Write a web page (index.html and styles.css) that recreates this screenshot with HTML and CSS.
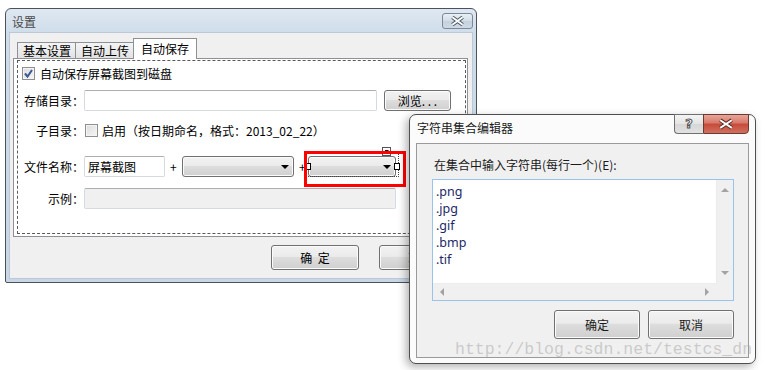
FILE: index.html
```html
<!DOCTYPE html>
<html lang="zh-CN">
<head>
    <meta charset="UTF-8">
    <title>设置</title>
    <link rel="stylesheet" href="styles.css">
</head>
<body>

<div class="desktop">

    <!-- main settings window -->
    <div class="window main-window">
        <div class="titlebar">
            <span class="title">设置</span>
            <span class="caption-btn close-btn">
                <svg width="31" height="16" viewBox="0 0 31 16">
                    <path d="M10 4 L21 12 M21 4 L10 12" stroke="#4b5563" stroke-width="4" fill="none"/>
                    <path d="M10 4 L21 12 M21 4 L10 12" stroke="#fff" stroke-width="2" fill="none"/>
                </svg>
            </span>
        </div>
        <div class="client">
            <div class="tabs">
                <div class="tab">基本设置</div>
                <div class="tab">自动上传</div>
                <div class="tab active">自动保存</div>
            </div>
            <div class="tab-panel">
                <div class="design-frame">
                    <div class="row row-check">
                        <span class="checkbox">
                            <svg width="11" height="11" viewBox="0 0 11 11">
                                <path d="M2 5.5 L4.5 8.5 L9 2" stroke="#3a5796" stroke-width="2" fill="none"/>
                            </svg>
                        </span>
                        <span class="check-text">自动保存屏幕截图到磁盘</span>
                    </div>
                    <div class="row row-dir">
                        <span class="field-label">存储目录：</span>
                        <span class="textbox dir-box"></span>
                        <span class="button browse-btn">浏览. . .</span>
                    </div>
                    <div class="row row-sub">
                        <span class="field-label">子目录：</span>
                        <span class="checkbox sub-check"></span>
                        <span class="check-text">启用（按日期命名，格式：2013_02_22）</span>
                    </div>
                    <div class="row row-name">
                        <span class="field-label">文件名称：</span>
                        <span class="textbox name-box">屏幕截图</span>
                        <span class="plus">+</span>
                        <span class="combo combo-first"><span class="arrow"></span></span>
                        <span class="plus plus-second">+</span>
                        <span class="selected">
                            <span class="combo combo-second"><span class="arrow"></span></span>
                            <span class="sel-dots"></span>
                            <span class="handle handle-left"></span>
                            <span class="handle handle-right"></span>
                            <span class="smart-tag"><span class="tag-arrow"></span></span>
                            <span class="red-mark"></span>
                        </span>
                    </div>
                    <div class="row row-sample">
                        <span class="field-label">示例：</span>
                        <span class="textbox sample-box"></span>
                    </div>
                </div>
            </div>
            <div class="footer">
                <span class="button footer-btn">确 定</span>
                <span class="button footer-btn">取 消</span>
            </div>
        </div>
    </div>

    <!-- string collection editor -->
    <div class="window dialog">
        <div class="dlg-titlebar">
            <span class="dlg-title">字符串集合编辑器</span>
            <span class="help-btn">?</span>
            <span class="red-close">
                <svg width="46" height="19" viewBox="0 0 46 19">
                    <path d="M17 5 L29 13 M29 5 L17 13" stroke="#5a2a24" stroke-width="4" fill="none"/>
                    <path d="M17 5 L29 13 M29 5 L17 13" stroke="#fff" stroke-width="2" fill="none"/>
                </svg>
            </span>
        </div>
        <div class="dlg-client">
            <div class="dlg-label">在集合中输入字符串(每行一个)(E):</div>
            <div class="string-box">
                <div class="string-lines">
                    <div>.png</div>
                    <div>.jpg</div>
                    <div>.gif</div>
                    <div>.bmp</div>
                    <div>.tif</div>
                </div>
                <div class="vscroll">
                    <span class="tri tri-up"></span>
                    <span class="tri tri-down"></span>
                </div>
                <div class="hscroll">
                    <span class="tri tri-left"></span>
                    <span class="tri tri-right"></span>
                </div>
                <div class="scroll-corner"></div>
            </div>
            <div class="dlg-buttons">
                <span class="button dlg-btn">确定</span>
                <span class="button dlg-btn">取消</span>
            </div>
        </div>
    </div>

    <div class="watermark">http://blog.csdn.net/testcs_dn</div>
</div>

</body>
</html>
```

FILE: styles.css
```css
body {
    margin: 0;
    background: #fff;
    font-family: "Noto Sans CJK SC", sans-serif;
    font-size: 12px;
    color: #000;
}
.desktop {
    position: relative;
    width: 765px;
    height: 370px;
    overflow: hidden;
}
.window {
    position: absolute;
    box-sizing: border-box;
}

/* ---------- main window ---------- */
.main-window {
    left: 5px;
    top: 8px;
    width: 472px;
    height: 275px;
    border: 1px solid #4a525e;
    border-radius: 6px 6px 2px 2px;
    background: linear-gradient(#dfe8f2, #cfdcea 24px, #c8d6e5);
    padding: 0 3px 3px;
    display: flex;
    flex-direction: column;
}
.titlebar {
    height: 23px;
    display: flex;
    align-items: flex-start;
}
.title {
    margin: 6px 0 0 3px;
    line-height: 14px;
    color: #4a4a4a;
}
.close-btn {
    margin-left: auto;
    margin-top: 4px;
    width: 31px;
    height: 16px;
    box-sizing: border-box;
    border: 1px solid #7d8896;
    border-radius: 3px;
    background: linear-gradient(#e9eff5, #d2dce7 50%, #c4d0dd 51%, #cfdae6);
    display: flex;
    align-items: center;
    justify-content: center;
}
.close-btn svg {
    margin-top: -1px;
}
.client {
    flex: 1;
    background: #f0f0f0;
    border: 1px solid #bcc8d5;
    padding: 5px 4px 0 3px;
    display: flex;
    flex-direction: column;
}
.tabs {
    height: 20px;
    display: flex;
    align-items: flex-end;
    padding-left: 4px;
}
.tab {
    height: 16px;
    box-sizing: border-box;
    border: 1px solid #8e9095;
    border-bottom: none;
    padding: 0 4px 0 5px;
    line-height: 15px;
    background: linear-gradient(#f4f4f4, #e2e2e2);
    margin-right: -1px;
}
.tab.active {
    height: 21px;
    margin-bottom: -1px;
    padding: 1px 7px 0;
    line-height: 18px;
    background: #fff;
    position: relative;
    z-index: 1;
}
.tab-panel {
    height: 179px;
    box-sizing: border-box;
    border: 1px solid #8e9095;
    background: #fff;
    display: flex;
    flex-direction: column;
}
.design-frame {
    flex: 1;
    margin: 1px 1px 2px 3px;
    border: 1px dashed #5a5a5a;
    padding: 6px 0 0 4px;
}
.row {
    display: flex;
    align-items: center;
}
.row-check { height: 13px; }
.row-dir { height: 21px; margin-top: 10px; }
.row-sub { height: 13px; margin-top: 13px; }
.row-name { height: 21px; margin-top: 19px; }
.row-sample { height: 21px; margin-top: 11px; }

.field-label {
    width: 62px;
    text-align: right;
    line-height: 14px;
}
.check-text {
    margin-left: 5px;
    line-height: 14px;
}
.checkbox {
    width: 13px;
    height: 13px;
    box-sizing: border-box;
    border: 1px solid #8f8f8f;
    background: linear-gradient(135deg, #dcdcdc, #f6f6f6);
    box-shadow: inset 0 0 0 1px #f4f4f4;
    display: flex;
    align-items: center;
    justify-content: center;
}
.sub-check {
    margin-left: 1px;
}
.row-sub .check-text {
    margin-left: 4px;
}
.textbox {
    height: 21px;
    box-sizing: border-box;
    border: 1px solid #d5dae2;
    border-top-color: #abadb3;
    border-radius: 2px;
    background: #fff;
    padding-left: 3px;
    line-height: 19px;
}
.dir-box { width: 293px; }
.name-box { width: 81px; }
.sample-box {
    width: 312px;
    background: #f0f0f0;
}
.button {
    box-sizing: border-box;
    border: 1px solid #707070;
    border-radius: 3px;
    background: linear-gradient(#f2f2f2, #ebebeb 45%, #dddddd 50%, #cfcfcf);
    box-shadow: inset 0 0 0 1px #fbfbfb;
    display: flex;
    align-items: center;
    justify-content: center;
}
.browse-btn {
    width: 67px;
    height: 21px;
    margin-left: 7px;
}
.plus {
    margin: 0 5px;
    width: 7px;
    line-height: 14px;
}
.plus-second {
    margin: 0 2px 0 5px;
}
.combo {
    position: relative;
    height: 21px;
    box-sizing: border-box;
    border: 1px solid #707070;
    border-radius: 3px;
    background: linear-gradient(#f2f2f2, #ebebeb 45%, #dddddd 50%, #cfcfcf);
    box-shadow: inset 0 0 0 1px #fbfbfb;
}
.combo-first { width: 112px; }
.combo-second { width: 88px; display: block; }
.arrow {
    position: absolute;
    right: 4px;
    top: 8px;
    border-top: 4px solid #000;
    border-left: 4px solid transparent;
    border-right: 4px solid transparent;
}

/* designer adornments around the selected combo */
.selected {
    position: relative;
}
.sel-dots {
    position: absolute;
    left: -2px;
    top: -4px;
    width: 93px;
    height: 25px;
    box-sizing: border-box;
    border: 1px dotted #444;
}
.handle {
    position: absolute;
    top: 7px;
    width: 6px;
    height: 7px;
    box-sizing: border-box;
    border: 1px solid #000;
    background: #fff;
}
.handle-left { left: -3px; }
.handle-right { left: 86px; }
.smart-tag {
    position: absolute;
    left: 74px;
    top: -9px;
    width: 9px;
    height: 9px;
    box-sizing: border-box;
    border: 1px solid #555;
    background: #fff;
}
.tag-arrow {
    position: absolute;
    left: 2px;
    top: 2px;
    border-top: 4px solid #000;
    border-right: 4px solid transparent;
}
.red-mark {
    position: absolute;
    left: -4px;
    top: -5px;
    width: 102px;
    height: 36px;
    box-sizing: border-box;
    border: 3px solid #f00;
}

.footer {
    display: flex;
    justify-content: flex-end;
    gap: 20px;
    padding-right: 1px;
    margin-top: 8px;
}
.footer-btn {
    width: 88px;
    height: 25px;
    word-spacing: 3px;
}

/* ---------- dialog ---------- */
.dialog {
    left: 409px;
    top: 114px;
    width: 347px;
    height: 250px;
    border: 1px solid #4f4f4f;
    border-radius: 7px;
    background: #fbfbfb;
    padding: 0 6px 5px;
    display: flex;
    flex-direction: column;
    box-shadow: -3px 3px 8px rgba(0,0,0,0.3);
}
.dlg-titlebar {
    height: 28px;
    display: flex;
    align-items: flex-start;
}
.dlg-title {
    margin: 5px 0 0 1px;
    line-height: 16px;
    color: #1a1a1a;
}
.help-btn {
    margin-left: auto;
    margin-top: -1px;
    width: 29px;
    height: 20px;
    box-sizing: border-box;
    border: 1px solid #6f6f6f;
    border-right: none;
    border-radius: 0 0 0 4px;
    background: linear-gradient(#f4f4f4, #e4e4e4 50%, #d6d6d6 51%, #e2e2e2);
    font-family: "DejaVu Sans", sans-serif;
    font-weight: bold;
    font-size: 13px;
    line-height: 18px;
    text-align: center;
    color: #fff;
    -webkit-text-stroke: 1px #555;
}
.red-close {
    margin-top: -1px;
    width: 46px;
    height: 20px;
    box-sizing: border-box;
    border: 1px solid #6b3a33;
    border-radius: 0 0 4px 0;
    background: linear-gradient(#e6a698, #d7786a 45%, #c74a3a 50%, #d0705f);
    display: flex;
    align-items: center;
    justify-content: center;
}
.dlg-client {
    flex: 1;
    border: 1px solid #9a9a9a;
    background: #f0f0f0;
    display: flex;
    flex-direction: column;
}
.dlg-label {
    margin: 13px 0 0 17px;
    line-height: 16px;
    color: #1a1a1a;
}
.string-box {
    margin: 6px 0 0 15px;
    width: 302px;
    height: 122px;
    box-sizing: border-box;
    border: 1px solid #99c3ea;
    background: #fff;
    display: grid;
    grid-template-columns: 1fr 17px;
    grid-template-rows: 1fr 17px;
}
.string-lines {
    padding: 3px 0 0 3px;
    font-family: "Noto Sans", sans-serif;
    font-size: 12.5px;
    line-height: 17px;
    color: #1b2766;
}
.vscroll, .hscroll, .scroll-corner {
    background: #f0f0f0;
    position: relative;
}
.vscroll {
    border-left: 1px solid #ececec;
}
.hscroll {
    border-top: 1px solid #ececec;
}
.tri {
    position: absolute;
    width: 0;
    height: 0;
}
.tri-up {
    left: 4px;
    top: 8px;
    border-bottom: 4px solid #a3a3a3;
    border-left: 4px solid transparent;
    border-right: 4px solid transparent;
}
.tri-down {
    left: 4px;
    bottom: 8px;
    border-top: 4px solid #a3a3a3;
    border-left: 4px solid transparent;
    border-right: 4px solid transparent;
}
.tri-left {
    left: 7px;
    top: 4px;
    border-right: 4px solid #a3a3a3;
    border-top: 4px solid transparent;
    border-bottom: 4px solid transparent;
}
.tri-right {
    right: 7px;
    top: 4px;
    border-left: 4px solid #a3a3a3;
    border-top: 4px solid transparent;
    border-bottom: 4px solid transparent;
}
.dlg-buttons {
    display: flex;
    justify-content: flex-end;
    gap: 8px;
    margin: 9px 14px 0 0;
}
.dlg-btn {
    width: 86px;
    height: 29px;
    color: #1a1a1a;
}

.watermark {
    position: absolute;
    left: 455px;
    top: 340px;
    font-family: "Liberation Mono", monospace;
    font-size: 16.5px;
    line-height: 20px;
    color: rgba(170,170,170,0.55);
    white-space: nowrap;
}
```
